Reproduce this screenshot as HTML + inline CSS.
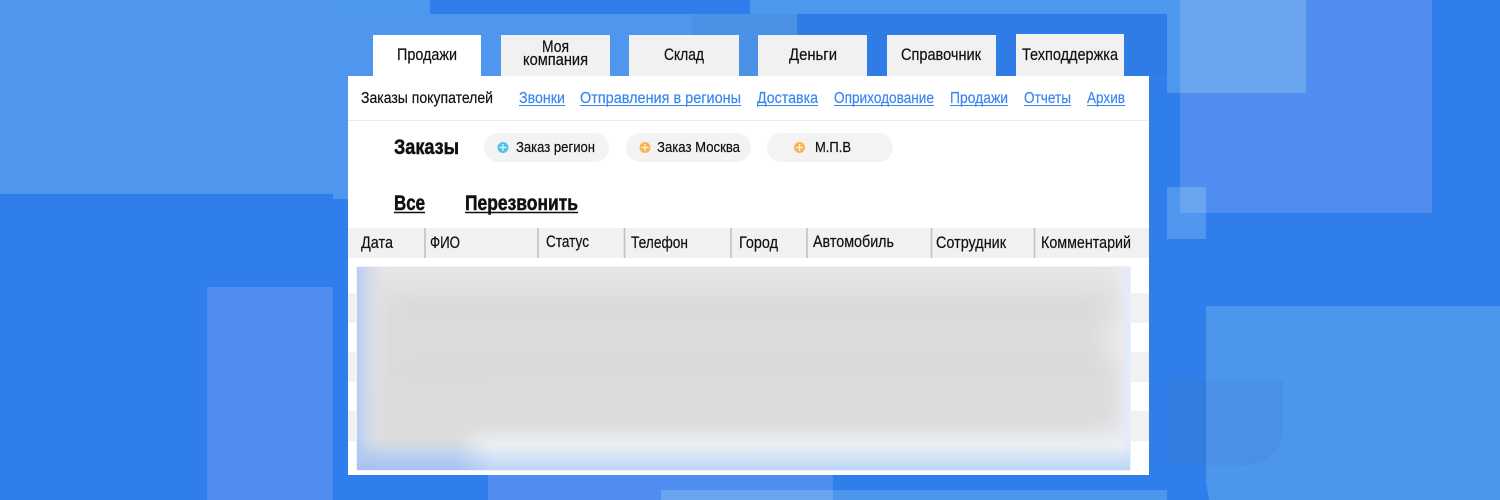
<!DOCTYPE html>
<html lang="ru"><head><meta charset="utf-8"><title>Заказы</title>
<style>
html,body{margin:0;padding:0;width:1500px;height:500px;overflow:hidden;background:#2f7eec}
#root{position:relative;width:1500px;height:500px;overflow:hidden;background:#2f7eec;contain:paint}
.a{position:absolute}
#blur{left:357px;top:267px;width:773px;height:203px;overflow:hidden;background:#edf0f5;box-shadow:0 0 0 1px #edf3fd}
#blur div{position:absolute}
svg{position:absolute;left:0;top:0}
text{font-family:"Liberation Sans Narrow","Liberation Sans",sans-serif;fill:#111;stroke:#111;stroke-width:.2px}
.l{fill:#3b87f0;stroke:#3b87f0}
</style></head><body><div id="root">
<!-- background -->
<div class="a" style="left:0;top:0;width:1167px;height:14px;background:#4d97ee"></div>
<div class="a" style="left:430px;top:0;width:320px;height:14px;background:#2f7eec"></div>
<div class="a" style="left:0;top:0;width:333px;height:194px;background:#4f97ee"></div>
<div class="a" style="left:333px;top:14px;width:359px;height:185px;background:#4f97ee"></div>
<div class="a" style="left:692px;top:14px;width:105px;height:62px;background:#4b91e6"></div>
<div class="a" style="left:797px;top:14px;width:370px;height:62px;background:#2f7ce6"></div>
<div class="a" style="left:207px;top:287px;width:126px;height:213px;background:#508df0"></div>
<div class="a" style="left:488px;top:475px;width:345px;height:25px;background:#508df0"></div>
<div class="a" style="left:661px;top:490px;width:506px;height:10px;background:#4c96ec"></div>
<div class="a" style="left:661px;top:490px;width:172px;height:10px;background:#68a5ee"></div>
<div class="a" style="left:1180px;top:0;width:252px;height:213px;background:#508df0"></div>
<div class="a" style="left:1167px;top:0;width:139px;height:93px;background:#4d97ee"></div>
<div class="a" style="left:1180px;top:0;width:126px;height:93px;background:#68a5ee"></div>
<div class="a" style="left:1167px;top:187px;width:39px;height:52px;background:#4f97ee"></div>
<div class="a" style="left:1180px;top:187px;width:26px;height:26px;background:#68a5ee"></div>
<svg width="1500" height="500" xmlns="http://www.w3.org/2000/svg"><path d="M1206 306H1500V500H1209.500Q1207 491 1206 480Z" fill="#4c96ec"/></svg>
<div class="a" style="left:1167px;top:381px;width:116px;height:84px;background:#347de0;border-bottom-right-radius:38px;overflow:hidden"><div class="a" style="left:39px;top:0;width:77px;height:84px;background:#4a90e6"></div></div>
<!-- panel -->
<div class="a" style="left:373px;top:35px;width:108px;height:41px;background:#fff"></div>
<div class="a" style="left:501px;top:35px;width:109px;height:41px;background:#f1f1f1"></div>
<div class="a" style="left:629px;top:35px;width:110px;height:41px;background:#f1f1f1"></div>
<div class="a" style="left:758px;top:35px;width:109px;height:41px;background:#f1f1f1"></div>
<div class="a" style="left:887px;top:35px;width:109px;height:41px;background:#f1f1f1"></div>
<div class="a" style="left:1016px;top:34px;width:108px;height:42px;background:#f1f1f1"></div>
<div class="a" style="left:348px;top:76px;width:801px;height:399px;background:#fff"></div>
<div class="a" style="left:348px;top:120px;width:801px;height:1px;background:#ececec"></div>
<div class="a" style="left:484px;top:133px;width:125px;height:29px;border-radius:15px;background:#f3f3f3"></div>
<div class="a" style="left:626px;top:133px;width:125px;height:29px;border-radius:15px;background:#f3f3f3"></div>
<div class="a" style="left:767px;top:133px;width:126px;height:29px;border-radius:15px;background:#f3f3f3"></div>
<div class="a" style="left:348px;top:228px;width:801px;height:30px;background:#f1f1f1"></div>
<div class="a" style="left:348px;top:293px;width:801px;height:30px;background:#f1f1f1"></div>
<div class="a" style="left:348px;top:352px;width:801px;height:30px;background:#f1f1f1"></div>
<div class="a" style="left:348px;top:411px;width:801px;height:30px;background:#f1f1f1"></div>
<!-- blurred block -->
<div id="blur" class="a">
  <div style="left:12px;top:-25px;width:752px;height:190px;background:linear-gradient(#e8e8e8 0,#e8e8e8 20px,#dcdcdc 65px,#dcdcdc 100%);filter:blur(10px)"></div>
  <div style="left:2px;top:125px;width:112px;height:62px;background:#dcdcdc;filter:blur(9px)"></div>
  <div style="left:748px;top:52px;width:25px;height:40px;background:#ebebeb;filter:blur(12px)"></div>
  <div style="left:45px;top:37px;width:690px;height:8px;background:#d8d8d8;filter:blur(7px)"></div>
  <div style="left:45px;top:95px;width:690px;height:8px;background:#d8d8d8;filter:blur(7px)"></div>
  <div style="left:45px;top:152px;width:690px;height:8px;background:#dadada;filter:blur(7px)"></div>
  <div style="left:30px;top:119px;width:715px;height:2px;opacity:.55;background:repeating-linear-gradient(90deg,#e2e2e2 0,#e2e2e2 4px,transparent 4px,transparent 11px);filter:blur(1px)"></div>
  <div style="left:30px;top:135px;width:715px;height:2px;opacity:.55;background:repeating-linear-gradient(90deg,#e2e2e2 0,#e2e2e2 3px,transparent 3px,transparent 14px);filter:blur(1px)"></div>
  <div style="left:0;top:0;width:32px;height:203px;background:linear-gradient(90deg,#b6cef3 0,#cfd9ea 30%,rgba(220,222,226,.7) 65%,rgba(220,220,220,0) 100%)"></div>
  <div style="right:0;top:0;width:10px;height:203px;background:linear-gradient(90deg,rgba(225,234,248,0),#e2eafa)"></div>
  <div style="left:0;top:178px;width:773px;height:25px;background:linear-gradient(rgba(190,214,248,0),#bcd5f8)"></div>
  <div style="left:0;top:172px;width:135px;height:31px;background:linear-gradient(rgba(165,195,238,0),#a5c3ee);-webkit-mask-image:linear-gradient(90deg,#000 72%,transparent);mask-image:linear-gradient(90deg,#000 72%,transparent)"></div>
</div>
<svg width="1500" height="500" xmlns="http://www.w3.org/2000/svg">
<g font-size="16.500">
<text x="397" y="60" textLength="60" lengthAdjust="spacingAndGlyphs">Продажи</text>
<text x="542" y="52" textLength="27" lengthAdjust="spacingAndGlyphs">Моя</text>
<text x="523" y="65" textLength="65" lengthAdjust="spacingAndGlyphs">компания</text>
<text x="664" y="60" textLength="40" lengthAdjust="spacingAndGlyphs">Склад</text>
<text x="789" y="60" textLength="48" lengthAdjust="spacingAndGlyphs">Деньги</text>
<text x="901" y="60" textLength="80" lengthAdjust="spacingAndGlyphs">Справочник</text>
<text x="1022" y="60" textLength="96" lengthAdjust="spacingAndGlyphs">Техподдержка</text>
</g>
<g font-size="15.500">
<text x="361" y="103" textLength="132" lengthAdjust="spacingAndGlyphs">Заказы покупателей</text>
<text class="l" x="519" y="103" textLength="46" lengthAdjust="spacingAndGlyphs">Звонки</text>
<text class="l" x="580" y="103" textLength="161" lengthAdjust="spacingAndGlyphs">Отправления в регионы</text>
<text class="l" x="757" y="103" textLength="61" lengthAdjust="spacingAndGlyphs">Доставка</text>
<text class="l" x="834" y="103" textLength="100" lengthAdjust="spacingAndGlyphs">Оприходование</text>
<text class="l" x="950" y="103" textLength="58" lengthAdjust="spacingAndGlyphs">Продажи</text>
<text class="l" x="1024" y="103" textLength="47" lengthAdjust="spacingAndGlyphs">Отчеты</text>
<text class="l" x="1087" y="103" textLength="38" lengthAdjust="spacingAndGlyphs">Архив</text>
</g>
<path d="M519 105.500H565M580 105.500H741M757 105.500H818M834 105.500H934M950 105.500H1008M1024 105.500H1071M1087 105.500H1125" stroke="#3b87f0" stroke-width="1"/>
<g font-size="21" font-weight="700">
<text x="394" y="154" textLength="65" lengthAdjust="spacingAndGlyphs" style="stroke-width:.5px">Заказы</text>
<text x="394" y="210" textLength="31" lengthAdjust="spacingAndGlyphs" style="stroke-width:.5px">Все</text>
<text x="465" y="210" textLength="113" lengthAdjust="spacingAndGlyphs" style="stroke-width:.5px">Перезвонить</text>
</g>
<path d="M394 212.500H425M465 212.500H578" stroke="#111" stroke-width="1.500"/>
<g font-size="14.500">
<text x="516" y="152" textLength="79" lengthAdjust="spacingAndGlyphs">Заказ регион</text>
<text x="657" y="152" textLength="83" lengthAdjust="spacingAndGlyphs">Заказ Москва</text>
<text x="815" y="152" textLength="36" lengthAdjust="spacingAndGlyphs">М.П.В</text>
</g>
<circle cx="503" cy="147.500" r="5.500" fill="#4dc3f0"/>
<circle cx="645" cy="147.500" r="5.500" fill="#fdb44e"/>
<circle cx="799.500" cy="147.500" r="5.500" fill="#fdb44e"/>
<path d="M499.500 147.500H506.500M503 144V151M641.500 147.500H648.500M645 144V151M796 147.500H803M799.500 144V151" stroke="#fff" stroke-width="1.200" opacity=".85"/>
<path d="M425 228V258M538 228V258M624.500 228V258M731 228V258M807 228V258M931.500 228V258M1034.500 228V258" stroke="#bac2cd" stroke-width="1.600"/>
<g font-size="16.500">
<text x="361" y="248" textLength="32" lengthAdjust="spacingAndGlyphs">Дата</text>
<text x="430" y="248" textLength="30" lengthAdjust="spacingAndGlyphs">ФИО</text>
<text x="546" y="247" textLength="43" lengthAdjust="spacingAndGlyphs">Статус</text>
<text x="631" y="248" textLength="57" lengthAdjust="spacingAndGlyphs">Телефон</text>
<text x="739" y="248" textLength="39" lengthAdjust="spacingAndGlyphs">Город</text>
<text x="813" y="247" textLength="81" lengthAdjust="spacingAndGlyphs">Автомобиль</text>
<text x="936" y="248" textLength="70" lengthAdjust="spacingAndGlyphs">Сотрудник</text>
<text x="1041" y="248" textLength="90" lengthAdjust="spacingAndGlyphs">Комментарий</text>
</g>
</svg>
</div></body></html>
